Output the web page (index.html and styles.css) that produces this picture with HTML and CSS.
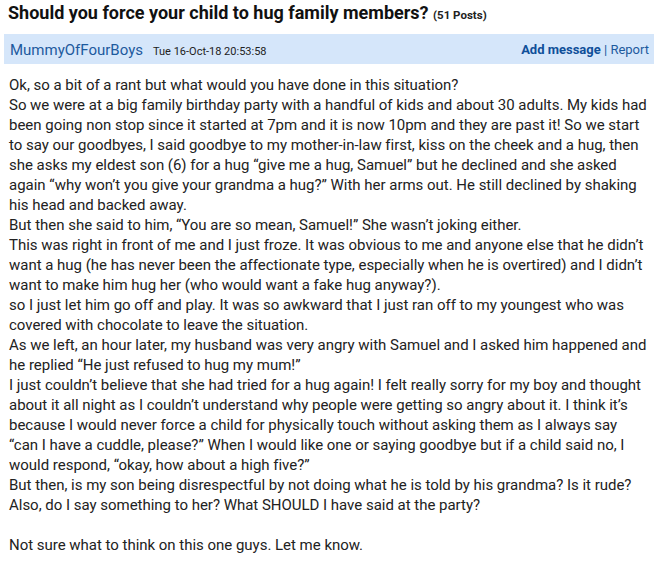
FILE: index.html
```html
<!DOCTYPE html>
<html>
<head>
<meta charset="utf-8">
<link rel="stylesheet" href="styles.css">
</head>
<body>
<div class="page">
  <h1 class="title">Should you force your child to hug family members? <span class="count">(51 Posts)</span></h1>
  <div class="bar">
    <div class="who"><span class="name">MummyOfFourBoys</span><span class="date">Tue 16-Oct-18 20:53:58</span></div>
    <div class="actions"><span class="add">Add message</span> | <span class="report">Report</span></div>
  </div>
  <div class="post">Ok, so a bit of a rant but what would you have done in this situation?<br>So we were at a big family birthday party with a handful of kids and about 30 adults. My kids had been going non stop since it started at 7pm and it is now 10pm and they are past it! So we start to say our goodbyes, I said goodbye to my mother-in-law first, kiss on the cheek and a hug, then she asks my eldest son (6) for a hug “give me a hug, Samuel” but he declined and she asked again “why won’t you give your grandma a hug?” With her arms out. He still declined by shaking his head and backed away.<br>But then she said to him, “You are so mean, Samuel!” She wasn’t joking either.<br>This was right in front of me and I just froze. It was obvious to me and anyone else that he didn’t want a hug (he has never been the affectionate type, especially when he is overtired) and I didn’t want to make him hug her (who would want a fake hug anyway?).<br>so I just let him go off and play. It was so awkward that I just ran off to my youngest who was covered with chocolate to leave the situation.<br>As we left, an hour later, my husband was very angry with Samuel and I asked him happened and he replied “He just refused to hug my mum!”<br>I just couldn’t believe that she had tried for a hug again! I felt really sorry for my boy and thought about it all night as I couldn’t understand why people were getting so angry about it. I think it’s because I would never force a child for physically touch without asking them as I always say “can I have a cuddle, please?” When I would like one or saying goodbye but if a child said no, I would respond, “okay, how about a high five?”<br>But then, is my son being disrespectful by not doing what he is told by his grandma? Is it rude?<br>Also, do I say something to her? What SHOULD I have said at the party?<br><br>Not sure what to think on this one guys. Let me know.</div>
</div>
</body>
</html>
```
FILE: styles.css
```css
html, body { margin: 0; padding: 0; background: #fff; }
.page { padding: 1px 12px 0 4px; }
.title {
  margin: 0;
  padding: 0 0 0 4px;
  font-family: Roboto, "Liberation Sans", sans-serif;
  font-weight: bold;
  font-size: 18px;
  line-height: 24px;
  color: #111;
}
.count { font-size: 11.5px; font-weight: bold; color: #222; }
.bar {
  margin-top: 7px;
  height: 30px;
  background: #d5e6fa;
  display: flex;
  align-items: center;
  justify-content: space-between;
  padding: 0 5px 0 6px;
  font-family: Roboto, sans-serif;
}
.name { color: #1d5a9e; font-size: 15px; }
.date { font-size: 11px; color: #222; margin-left: 10px; }
.actions { font-size: 13px; color: #1d5a9e; }
.add { font-weight: bold; color: #0f4f99; }
.post {
  margin-top: 11px;
  padding: 0 5px 0 5px;
  font-family: Roboto, sans-serif;
  font-size: 15px;
  letter-spacing: -0.02px;
  line-height: 20px;
  color: #222;
}
```
